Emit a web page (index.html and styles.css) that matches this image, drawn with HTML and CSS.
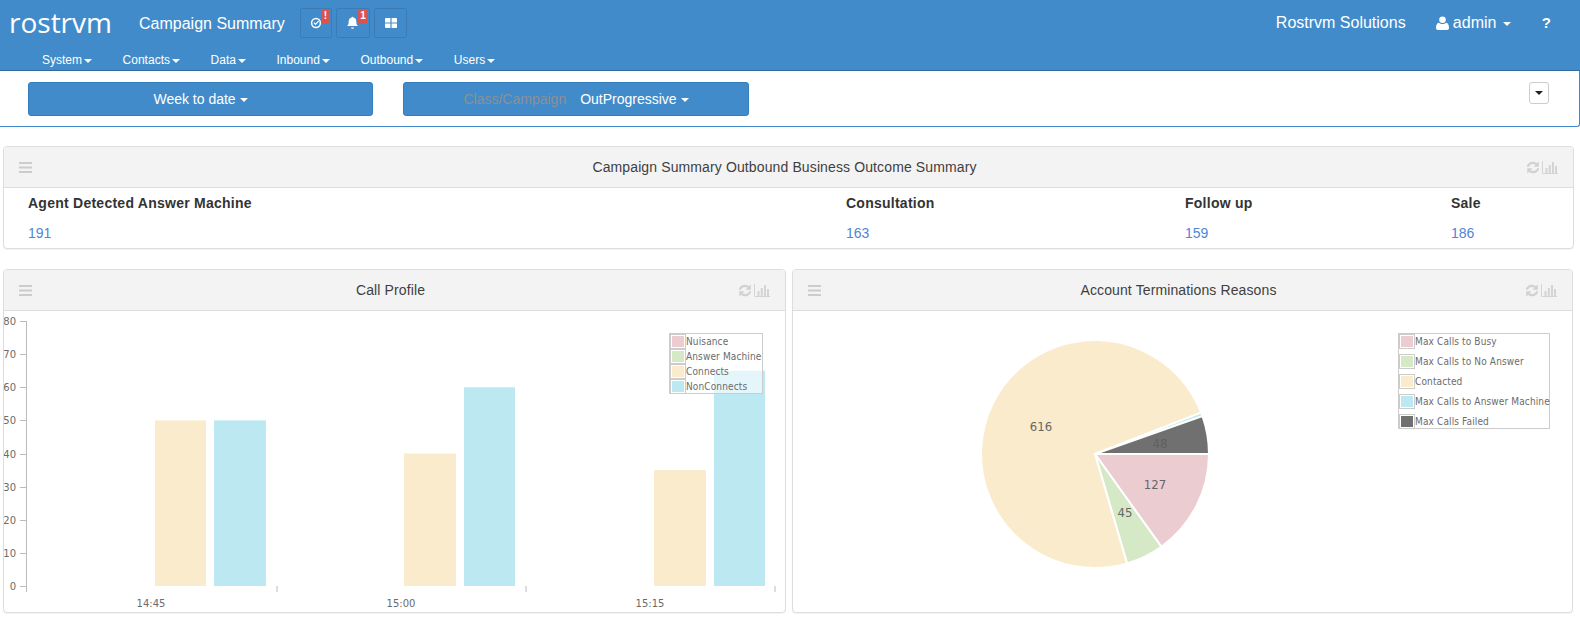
FILE: index.html
```html
<!DOCTYPE html>
<html lang="en">
<head>
<meta charset="utf-8">
<title>Campaign Summary</title>
<link rel="stylesheet" href="styles.css">
</head>
<body>
<header class="topbar">
  <div class="topline">
    <span class="logo">rostrvm</span>
    <span class="page-title">Campaign Summary</span>
    <div class="tools">
      <span class="tool tool-check">
        <svg class="ico" width="12" height="12" viewBox="0 0 12 12"><circle cx="6" cy="6" r="4.4" fill="none" stroke="#fff" stroke-width="1.5"/><path d="M3.900 5.700l1.600 1.700 3.200-3.500" fill="none" stroke="#fff" stroke-width="1.200"/></svg>
        <span class="badge">!</span>
      </span>
      <span class="tool tool-bell">
        <svg class="ico" width="13" height="13" viewBox="0 0 13 13"><path d="M6.5 0.8c.5 0 .8.3.8.8 2 .4 3 1.900 3 3.800 0 2.500.7 3.700 1.700 4.600H1c1-.9 1.700-2.100 1.700-4.600 0-1.900 1-3.400 3-3.800 0-.5.3-.8.8-.8zM5 11.400h3c-.1.800-.7 1.300-1.500 1.300S5.100 12.200 5 11.400z" fill="#fff"/></svg>
        <span class="badge badge-wide">1</span>
      </span>
      <span class="tool tool-grid">
        <svg class="ico" width="12" height="10" viewBox="0 0 12 10"><path d="M0 1a1 1 0 0 1 1-1h4.400v4.400H0zM6.600 0H11a1 1 0 0 1 1 1v3.400H6.600zM0 5.600h5.400V10H1a1 1 0 0 1-1-1zM6.600 5.600H12V9a1 1 0 0 1-1 1H6.600z" fill="#fff"/></svg>
      </span>
    </div>
    <div class="top-right">
      <span class="company">Rostrvm Solutions</span>
      <span class="user">
        <svg width="13" height="14" viewBox="0 0 13 14"><circle cx="6.500" cy="3.700" r="3.300" fill="#fff"/><path d="M0 12c0-3 .8-5 2.800-5.300 1 .9 2.300 1.300 3.700 1.300s2.700-.4 3.700-1.300C12.200 7 13 9 13 12c0 1.200-.8 2-2 2H2c-1.200 0-2-.8-2-2z" fill="#fff"/></svg>
        admin<i class="caret caret-user"></i>
      </span>
      <span class="help">?</span>
    </div>
  </div>
  <nav class="menu">
    <span class="menu-item">System<i class="caret"></i></span>
    <span class="menu-item">Contacts<i class="caret"></i></span>
    <span class="menu-item">Data<i class="caret"></i></span>
    <span class="menu-item">Inbound<i class="caret"></i></span>
    <span class="menu-item">Outbound<i class="caret"></i></span>
    <span class="menu-item">Users<i class="caret"></i></span>
  </nav>
</header>

<section class="filters">
  <button class="filter-btn" type="button">Week to date <i class="caret"></i></button>
  <button class="filter-btn filter-btn-wide" type="button"><span class="muted">Class/Campaign</span>OutProgressive <i class="caret"></i></button>
  <button class="toggle" type="button"><i class="caret caret-dark"></i></button>
</section>

<main class="content">
  <section class="panel">
    <div class="panel-head">
      <svg class="bars" width="13" height="11" viewBox="0 0 13 11"><path d="M0 0h13v2H0zM0 4.500h13v2H0zM0 9h13v2H0z" fill="#ccc"/></svg>
      <h2 class="panel-title">Campaign Summary Outbound Business Outcome Summary</h2>
      <span class="panel-icons">
        <svg width="14" height="13" viewBox="0 0 14 13"><path class="refresh" d="M1 5.500C1.500 2.800 3.800 1 6.800 1c1.700 0 3 .6 4 1.600L12.500 1v4.400H8.100l1.600-1.600c-.7-.7-1.700-1.100-2.900-1.100-1.900 0-3.400 1.100-3.900 2.800zM13 7.500c-.5 2.700-2.800 4.500-5.800 4.500-1.700 0-3-.6-4-1.600L1.500 12V7.600h4.400L4.300 9.200c.7.700 1.700 1.100 2.900 1.100 1.900 0 3.400-1.100 3.900-2.800z"/></svg>
        <svg width="16" height="13" viewBox="0 0 16 13"><path d="M.5 0v12.500H16" fill="none" stroke="#d4d4d4"/><path d="M3.500 7h2v5h-2zM6.800 4h2v8h-2zM10 1h2v11h-2zM13 5h2v7h-2z" fill="#d4d4d4"/></svg>
      </span>
    </div>
    <table class="outcomes">
      <thead><tr><th class="c1">Agent Detected Answer Machine</th><th class="c2">Consultation</th><th class="c3">Follow up</th><th>Sale</th></tr></thead>
      <tbody><tr><td>191</td><td>163</td><td>159</td><td>186</td></tr></tbody>
    </table>
  </section>

  <div class="chart-row">
    <section class="panel chart-panel">
      <div class="panel-head">
        <svg class="bars" width="13" height="11" viewBox="0 0 13 11"><path d="M0 0h13v2H0zM0 4.500h13v2H0zM0 9h13v2H0z" fill="#ccc"/></svg>
        <h2 class="panel-title">Call Profile</h2>
        <span class="panel-icons">
          <svg width="14" height="13" viewBox="0 0 14 13"><path class="refresh" d="M1 5.500C1.500 2.800 3.800 1 6.800 1c1.700 0 3 .6 4 1.600L12.500 1v4.400H8.100l1.600-1.600c-.7-.7-1.700-1.100-2.900-1.100-1.900 0-3.400 1.100-3.900 2.800zM13 7.500c-.5 2.700-2.800 4.500-5.800 4.500-1.700 0-3-.6-4-1.600L1.500 12V7.600h4.400L4.300 9.200c.7.700 1.700 1.100 2.900 1.100 1.900 0 3.400-1.100 3.900-2.800z"/></svg>
          <svg width="16" height="13" viewBox="0 0 16 13"><path d="M.5 0v12.500H16" fill="none" stroke="#d4d4d4"/><path d="M3.500 7h2v5h-2zM6.800 4h2v8h-2zM10 1h2v11h-2zM13 5h2v7h-2z" fill="#d4d4d4"/></svg>
        </span>
      </div>
      <div class="chart-body">
        <svg class="chart" width="781" height="301" viewBox="4 311 781 301">
          <g fill="#faebcc">
            <rect x="155" y="420.400" width="51" height="165.600"/>
            <rect x="404" y="453.500" width="52" height="132.500"/>
            <rect x="654" y="470" width="52" height="116"/>
          </g>
          <g fill="#bce8f1">
            <rect x="214" y="420.400" width="52" height="165.600"/>
            <rect x="464" y="387.300" width="51" height="198.700"/>
            <rect x="714" y="370.800" width="51" height="215.200"/>
          </g>
          <g stroke="#bbb" fill="none">
            <path d="M26.500 321v271"/>
            <path d="M20 321.500h6M20 354.500h6M20 387.500h6M20 420.500h6M20 454.500h6M20 487.500h6M20 520.500h6M20 553.500h6M20 586.500h6"/>
            <path d="M277 586v6M526 586v6M775 586v6"/>
          </g>
          <g class="tick" text-anchor="end">
            <text x="16" y="325">80</text><text x="16" y="358">70</text><text x="16" y="391">60</text>
            <text x="16" y="424">50</text><text x="16" y="458">40</text><text x="16" y="491">30</text>
            <text x="16" y="524">20</text><text x="16" y="557">10</text><text x="16" y="590">0</text>
          </g>
          <g class="tick" text-anchor="middle">
            <text x="151" y="607">14:45</text><text x="401" y="607">15:00</text><text x="650" y="607">15:15</text>
          </g>
        </svg>
        <div class="legend legend-bars">
          <div class="legend-row"><span class="swatch"><i class="s-pink"></i></span>Nuisance</div>
          <div class="legend-row"><span class="swatch"><i class="s-green"></i></span>Answer Machine</div>
          <div class="legend-row"><span class="swatch"><i class="s-cream"></i></span>Connects</div>
          <div class="legend-row"><span class="swatch"><i class="s-blue"></i></span>NonConnects</div>
        </div>
      </div>
    </section>

    <section class="panel chart-panel">
      <div class="panel-head">
        <svg class="bars" width="13" height="11" viewBox="0 0 13 11"><path d="M0 0h13v2H0zM0 4.500h13v2H0zM0 9h13v2H0z" fill="#ccc"/></svg>
        <h2 class="panel-title">Account Terminations Reasons</h2>
        <span class="panel-icons">
          <svg width="14" height="13" viewBox="0 0 14 13"><path class="refresh" d="M1 5.500C1.500 2.800 3.800 1 6.800 1c1.700 0 3 .6 4 1.600L12.500 1v4.400H8.100l1.600-1.600c-.7-.7-1.700-1.100-2.900-1.100-1.900 0-3.400 1.100-3.900 2.800zM13 7.500c-.5 2.700-2.800 4.500-5.800 4.500-1.700 0-3-.6-4-1.600L1.500 12V7.600h4.400L4.300 9.200c.7.700 1.700 1.100 2.900 1.100 1.900 0 3.400-1.100 3.900-2.800z"/></svg>
          <svg width="16" height="13" viewBox="0 0 16 13"><path d="M.5 0v12.500H16" fill="none" stroke="#d4d4d4"/><path d="M3.500 7h2v5h-2zM6.800 4h2v8h-2zM10 1h2v11h-2zM13 5h2v7h-2z" fill="#d4d4d4"/></svg>
        </span>
      </div>
      <div class="chart-body">
        <svg class="chart" width="779" height="301" viewBox="794 311 779 301">
          <g stroke="#fff" stroke-width="2">
            <path d="M1096 454L1210 454A114 114 0 0 1 1162.300 546.700Z" fill="#ebccd1"/>
            <path d="M1096 454L1162.300 546.700A114 114 0 0 1 1128 563.400Z" fill="#d6e9c6"/>
            <path d="M1096 454L1128 563.400A114 114 0 1 1 1202.200 412.600Z" fill="#faebcc"/>
            <path d="M1096 454L1202.200 412.600A114 114 0 0 1 1203.500 416.100Z" fill="#bce8f1"/>
            <path d="M1096 454L1203.500 416.100A114 114 0 0 1 1210 454Z" fill="#707070"/>
          </g>
          <g class="pie-label" text-anchor="middle">
            <text x="1042" y="431">616</text>
            <text x="1156" y="489">127</text>
            <text x="1126" y="517">45</text>
            <text class="on-dark" x="1161" y="448">48</text>
          </g>
        </svg>
        <div class="legend legend-pie">
          <div class="legend-row"><span class="swatch"><i class="s-pink"></i></span>Max Calls to Busy</div>
          <div class="legend-row"><span class="swatch"><i class="s-green"></i></span>Max Calls to No Answer</div>
          <div class="legend-row"><span class="swatch"><i class="s-cream"></i></span>Contacted</div>
          <div class="legend-row"><span class="swatch"><i class="s-blue"></i></span>Max Calls to Answer Machine</div>
          <div class="legend-row"><span class="swatch"><i class="s-gray"></i></span>Max Calls Failed</div>
        </div>
      </div>
    </section>
  </div>
</main>
</body>
</html>
```

FILE: styles.css
```css
* { box-sizing: border-box; }
html, body { margin: 0; padding: 0; height: 100%; }
body {
  background: #fff;
  color: #333;
  font-family: "Liberation Sans", Arial, sans-serif;
  font-size: 14px;
  overflow: hidden;
}

.caret {
  display: inline-block;
  width: 0;
  height: 0;
  margin-left: 2px;
  vertical-align: middle;
  border-top: 4px solid #fff;
  border-left: 4px solid transparent;
  border-right: 4px solid transparent;
}
.caret-dark { border-top-color: #222; margin: 0; display: block; }

.topbar {
  height: 71px;
  background: #428bca;
  border-bottom: 1px solid #2f6a9c;
  color: #fff;
}
.topline {
  display: flex;
  align-items: flex-start;
  height: 48px;
  padding-left: 9px;
}
.logo {
  font-family: "Open Sans", "Noto Sans", sans-serif;
  font-size: 28px;
  font-weight: 400;
  line-height: 44px;
  width: 130px;
}
.page-title {
  font-size: 16px;
  line-height: 47px;
  width: 161px;
}
.tools { display: flex; gap: 4px; padding-top: 8px; }
.tool {
  position: relative;
  display: flex;
  align-items: center;
  justify-content: center;
  height: 30px;
  border: 1px solid #3a7cb5;
  border-radius: 2px;
}
.tool-check { width: 32px; }
.tool-bell { width: 34px; }
.tool-grid { width: 33px; }
.ico { margin-top: -1px; }
.tool-check .ico { margin-right: 1px; }
.tool-bell .ico { margin-left: -1px; }
.badge {
  position: absolute;
  top: 1px;
  right: 1px;
  width: 9px;
  height: 13px;
  background: #d9534f;
  font-size: 10px;
  font-weight: bold;
  line-height: 11px;
  text-align: center;
}
.badge-wide { width: 10px; }
.top-right {
  display: flex;
  margin-left: auto;
  font-size: 16px;
  line-height: 46px;
  padding-right: 29px;
}
.company { width: 160px; }
.user { width: 106px; display: flex; align-items: center; gap: 4px; height: 45px; }
.user .caret { margin-left: 3px; margin-top: 2px; }
.help { font-weight: bold; font-size: 15px; line-height: 45px; }

.menu {
  display: flex;
  padding-left: 42px;
  font-size: 12px;
  line-height: 24px;
  gap: 30.6px;
}
.menu-item { display: inline-block; }

.filters {
  position: relative;
  display: flex;
  gap: 30px;
  height: 56px;
  padding: 11px 0 0 28px;
  border-bottom: 1px solid #428bca;
  border-right: 1px solid #428bca;
  border-bottom-right-radius: 3px;
}
.filter-btn {
  width: 345px;
  height: 34px;
  padding: 0;
  background: #428bca;
  border: 1px solid #357ebd;
  border-radius: 3px;
  color: #fff;
  font-family: inherit;
  font-size: 14px;
}
.filter-btn-wide { width: 346px; }
.filter-btn .caret { margin-left: 0; }
.muted { color: #8f8f8f; margin-right: 14px; }
.toggle {
  position: absolute;
  top: 11px;
  left: 1529px;
  display: flex;
  align-items: center;
  justify-content: center;
  width: 20px;
  height: 22px;
  padding: 0;
  background: #fff;
  border: 1px solid #ccc;
  border-radius: 3px;
}

.content { padding: 19px 6px 0 3px; }
.panel {
  background: #fff;
  border: 1px solid #ddd;
  border-radius: 4px;
  box-shadow: 0 1px 1px rgba(0,0,0,.05);
}
.panel-head {
  position: relative;
  display: flex;
  align-items: center;
  justify-content: center;
  height: 41px;
  padding-right: 8px;
  background: #f3f3f3;
  border-bottom: 1px solid #ddd;
  border-radius: 3px 3px 0 0;
}
.bars { position: absolute; left: 15px; top: 15px; }
.panel-title { margin: 0; font-size: 14px; font-weight: normal; color: #3f3f3f; letter-spacing: .12px; }
.panel-icons {
  position: absolute;
  right: 0;
  top: 14px;
  display: flex;
  gap: 2px;
  padding-right: 15px;
}
.refresh { fill: #d0d0d0; stroke: #d0d0d0; stroke-width: .5; }

.outcomes { width: 100%; border-collapse: collapse; table-layout: fixed; }
.outcomes th {
  padding: 0 0 0 24px;
  height: 30px;
  font-size: 14px;
  font-weight: bold;
  text-align: left;
  color: #333;
  letter-spacing: .25px;
  line-height: 14px;
}
.outcomes td {
  padding: 8px 0 8px 24px;
  color: #4f86d8;
  font-size: 14px;
  line-height: 14px;
}
.c1 { width: 818px; }
.c2 { width: 339px; }
.c3 { width: 266px; }

.chart-row { display: grid; grid-template-columns: 783px 781px; gap: 6px; margin-top: 20px; }
.chart-panel { height: 344px; }
.chart-body { position: relative; height: 301px; }
.chart { display: block; }
.tick { font-family: "DejaVu Sans", sans-serif; font-size: 10px; fill: #6b6b6b; }
.pie-label { font-family: "DejaVu Sans Condensed", "DejaVu Sans", sans-serif; font-size: 13px; fill: #666; }
.on-dark { fill: #5f5f5f; }

.legend {
  position: absolute;
  background: rgba(255,255,255,.6);
  border: 1px solid #ccc;
  font-family: "DejaVu Sans Condensed", "DejaVu Sans", sans-serif;
  font-size: 10px;
  letter-spacing: .13px;
  color: #6b6b6b;
  white-space: nowrap;
}
.legend-row { display: flex; align-items: center; height: 15px; }
.swatch {
  display: block;
  width: 16px;
  height: 15px;
  padding: 1px;
  border: 1px solid #ccc;
  flex: none;
}
.swatch i { display: block; height: 100%; }
.s-pink { background: #ebccd1; }
.s-green { background: #d6e9c6; }
.s-cream { background: #faebcc; }
.s-blue { background: #bce8f1; }
.s-gray { background: #707070; }

.legend-bars { left: 665px; top: 22px; width: 94px; height: 61px; }
.legend-pie {
  left: 605px;
  top: 22px;
  width: 152px;
  height: 96px;
  display: flex;
  flex-direction: column;
  gap: 5px;
}
```
